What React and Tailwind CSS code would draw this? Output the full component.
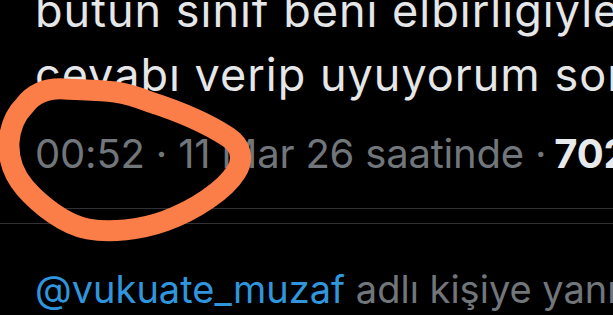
export default function App() {
  return (
    <div className="relative w-[613px] h-[315px] overflow-hidden bg-black font-['Inter','Roboto',sans-serif]">
      <div className="pl-[35px]">
        <div className="-mt-[21px] whitespace-nowrap text-[45px] leading-[64px] tracking-[1px] text-[#e4e6e7]">
          <div>bütün sınıf beni elbirliğiyle</div>
          <div>cevabı verip uyuyorum sonra</div>
        </div>
        <div className="mt-[19px] whitespace-nowrap border-b border-[#2f3336] pb-[26px] text-[40px] leading-[56px] tracking-[-0.2px] text-[#71767b]">
          00:52 · 11 Mar 26 saatinde ·<span className="ml-[8px] font-bold text-[#e7e9ea]">702</span> Görüntülenme
        </div>
      </div>
      <div className="mt-[14px] border-t border-[#2f3336]" />
      <div className="whitespace-nowrap pl-[35px] pt-[39px] text-[38px] leading-[52px] text-[#71767b]">
        <span className="text-[#2f95dc]">@vukuate_muzaf</span> adlı kişiye yanıt olarak
      </div>
      <svg className="absolute left-0 top-0" width="613" height="315" viewBox="0 0 613 315" fill="none">
        <path
          d="M 25 105 C 35 92, 50 88, 65 89 C 85 90, 100 90, 115 92 C 130 94, 140 98, 150 102 C 175 110, 205 122, 228 137 C 240 145, 245 158, 236 172 C 225 190, 195 210, 165 221 C 140 230, 110 233, 88 229 C 65 225, 40 205, 25 188 C 14 175, 8 160, 9 142 C 10 128, 15 115, 25 105 Z"
          stroke="#fb7d48"
          strokeWidth="21"
          strokeLinecap="round"
          strokeLinejoin="round"
        />
      </svg>
    </div>
  );
}
